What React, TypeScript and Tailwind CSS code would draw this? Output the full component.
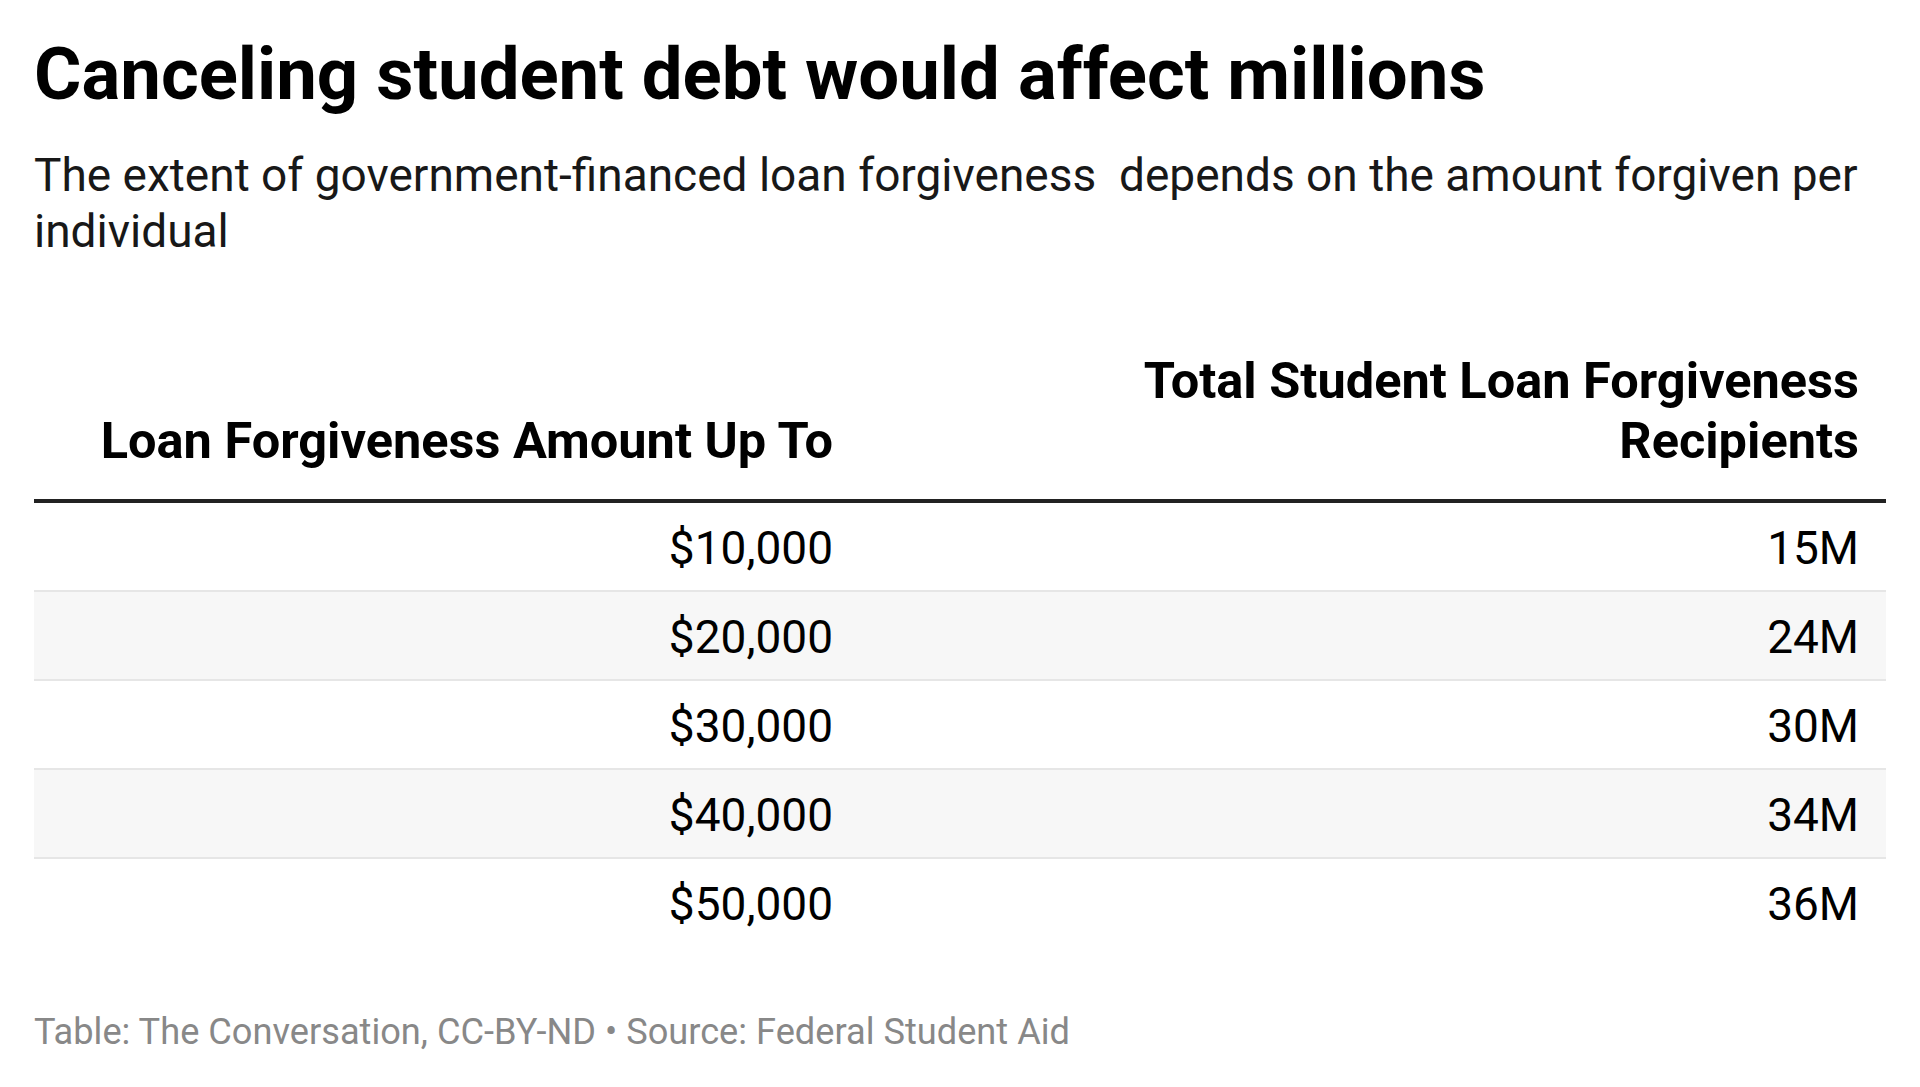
const rows = [
  { amount: "$10,000", recipients: "15M" },
  { amount: "$20,000", recipients: "24M" },
  { amount: "$30,000", recipients: "30M" },
  { amount: "$40,000", recipients: "34M" },
  { amount: "$50,000", recipients: "36M" },
];

export default function App() {
  return (
    <div className="min-h-screen bg-white px-[34px] pt-[31px] font-['Roboto',sans-serif] text-black">
      <h1 className="text-[72.5px] font-bold leading-[87px]">
        Canceling student debt would affect millions
      </h1>
      <p className="mt-[29px] text-[46px] leading-[56px] text-[#181818]">
        The extent of government-financed loan forgiveness{"\u00a0"} depends on the amount forgiven per individual
      </p>

      <table className="mt-[92px] w-full border-collapse">
        <thead>
          <tr className="border-b-4 border-[#222]">
            <th className="w-[826px] pr-[27px] pb-[28px] text-right align-bottom text-[50.5px] font-bold leading-[60px]">
              Loan Forgiveness Amount Up To
            </th>
            <th className="pr-[27px] pb-[28px] text-right align-bottom text-[50.5px] font-bold leading-[60px]">
              Total Student Loan Forgiveness
              <br />
              Recipients
            </th>
          </tr>
        </thead>
        <tbody>
          {rows.map((r, i) => (
            <tr
              key={r.amount}
              className={
                (i % 2 === 1 ? "bg-[#f7f7f7] " : "bg-white ") +
                (i < rows.length - 1 ? "border-b-2 border-[#e6e6e6]" : "")
              }
            >
              <td className="pr-[27px] pt-[17px] pb-[14px] text-right text-[46px] leading-[56px]">{r.amount}</td>
              <td className="pr-[27px] pt-[17px] pb-[14px] text-right text-[46px] leading-[56px]">{r.recipients}</td>
            </tr>
          ))}
        </tbody>
      </table>

      <p className="mt-[65px] text-[36.2px] leading-[42px] text-[#888]">
        Table: The Conversation, CC-BY-ND • Source: Federal Student Aid
      </p>
    </div>
  );
}
